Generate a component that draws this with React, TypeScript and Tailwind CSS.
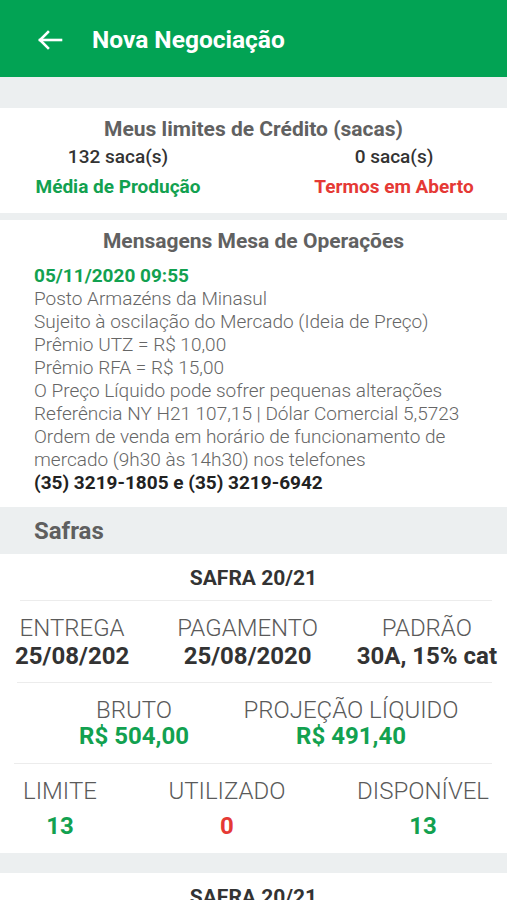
const green = "text-[#12a150]";
const label = "text-[24px] leading-[27px] font-light text-[#5a5a5a]";

function Divider({ left }: { left: string }) {
  return <div className={`${left} mr-[15px] h-px bg-[#ececec]`} />;
}

function SafraCard() {
  return (
    <div className="bg-white">
      <div className="flex h-[46px] items-center justify-center pt-[4px] text-[21px] font-bold text-[#333]">SAFRA 20/21</div>
      <Divider left="ml-[20px]" />
      <div className="flex pl-[15px] pr-[10px] pt-[14px] pb-[12px]">
        <div className="flex flex-col items-center">
          <span className={label}>ENTREGA</span>
          <span className="text-[24px] leading-[28px] font-bold text-[#333]">25/08/202</span>
        </div>
        <div className="ml-[48px] flex flex-col items-center">
          <span className={label}>PAGAMENTO</span>
          <span className="text-[24px] leading-[28px] font-bold text-[#333]">25/08/2020</span>
        </div>
        <div className="ml-auto flex flex-col items-center">
          <span className={label}>PADRÃO</span>
          <span className="text-[24px] leading-[28px] font-bold text-[#333]">30A, 15% cat</span>
        </div>
      </div>
      <Divider left="ml-[17px]" />
      <div className="flex pl-[54px] pt-[14px] pb-[14px]">
        <div className="flex w-[160px] flex-col items-center">
          <span className="text-[24px] leading-[26px] font-light text-[#5a5a5a]">BRUTO</span>
          <span className={`text-[24px] leading-[26px] font-bold ${green}`}>R$ 504,00</span>
        </div>
        <div className="ml-[17px] flex w-[240px] flex-col items-center">
          <span className="text-[24px] leading-[26px] font-light text-[#5a5a5a] whitespace-nowrap">PROJEÇÃO LÍQUIDO</span>
          <span className={`text-[24px] leading-[26px] font-bold ${green}`}>R$ 491,40</span>
        </div>
      </div>
      <Divider left="ml-[14px]" />
      <div className="flex justify-between pl-[23px] pr-[18px] pt-[14px] pb-[13px]">
        <div className="flex flex-col items-center gap-[8px]">
          <span className="text-[24px] leading-[26px] font-light text-[#5a5a5a]">LIMITE</span>
          <span className={`text-[24px] leading-[28px] font-bold ${green}`}>13</span>
        </div>
        <div className="flex flex-col items-center gap-[8px]">
          <span className="text-[24px] leading-[26px] font-light text-[#5a5a5a]">UTILIZADO</span>
          <span className="text-[24px] leading-[28px] font-bold text-[#e53935]">0</span>
        </div>
        <div className="flex flex-col items-center gap-[8px]">
          <span className="text-[24px] leading-[26px] font-light text-[#5a5a5a]">DISPONÍVEL</span>
          <span className={`text-[24px] leading-[28px] font-bold ${green}`}>13</span>
        </div>
      </div>
    </div>
  );
}

export default function App() {
  const lines = [
    "Posto Armazéns da Minasul",
    "Sujeito à oscilação do Mercado (Ideia de Preço)",
    "Prêmio UTZ = R$ 10,00",
    "Prêmio RFA = R$ 15,00",
    "O Preço Líquido pode sofrer pequenas alterações",
    "Referência NY H21 107,15 | Dólar Comercial 5,5723",
    "Ordem de venda em horário de funcionamento de",
    "mercado (9h30 às 14h30) nos telefones",
  ];

  return (
    <div className="h-[900px] overflow-hidden bg-[#eceff0] font-['Roboto',sans-serif]">
      {/* Toolbar */}
      <div className="flex h-[77px] items-center bg-[#02a354] pl-[37px] pt-[3px]">
        <svg width="26" height="20" viewBox="0 0 26 20" fill="none" stroke="white" strokeWidth="2.6" strokeLinecap="square">
          <path d="M3 10H24" />
          <path d="M11 2L3 10L11 18" />
        </svg>
        <h1 className="ml-[29px] text-[24.5px] font-bold text-white">Nova Negociação</h1>
      </div>

      <div className="h-[31px]" />

      {/* Limites */}
      <div className="bg-white pt-[8px] pb-[11px]">
        <h2 className="text-center text-[21px] leading-[26px] font-bold text-[#616161]">Meus limites de Crédito (sacas)</h2>
        <div className="grid grid-cols-[236px_1fr] gap-x-[45px]">
          <div className="flex flex-col items-center">
            <span className="text-[19px] leading-[30px] font-medium text-[#333]">132 saca(s)</span>
            <span className={`text-[19px] leading-[30px] font-bold ${green}`}>Média de Produção</span>
          </div>
          <div className="flex flex-col items-center">
            <span className="text-[19px] leading-[30px] font-medium text-[#333]">0 saca(s)</span>
            <span className="text-[19px] leading-[30px] font-bold text-[#e53935]">Termos em Aberto</span>
          </div>
        </div>
      </div>

      <div className="h-[7px]" />

      {/* Mensagens */}
      <div className="bg-white pt-[7px] pb-[13px]">
        <h2 className="text-center text-[21px] leading-[28px] font-bold text-[#616161]">Mensagens Mesa de Operações</h2>
        <div className="px-[34px] pt-[9px]">
          <p className={`text-[19px] leading-[23px] font-bold ${green}`}>05/11/2020 09:55</p>
          {lines.map((l) => (
            <p key={l} className="text-[19px] leading-[23px] font-light text-[#666]">{l}</p>
          ))}
          <p className="text-[19px] leading-[23px] font-bold text-[#222]">(35) 3219-1805 e (35) 3219-6942</p>
        </div>
      </div>

      {/* Safras */}
      <div className="flex h-[47px] items-center px-[34px]">
        <span className="text-[24px] font-bold text-[#5f5f5f]">Safras</span>
      </div>

      <SafraCard />
      <div className="h-[20px]" />
      <SafraCard />
    </div>
  );
}
